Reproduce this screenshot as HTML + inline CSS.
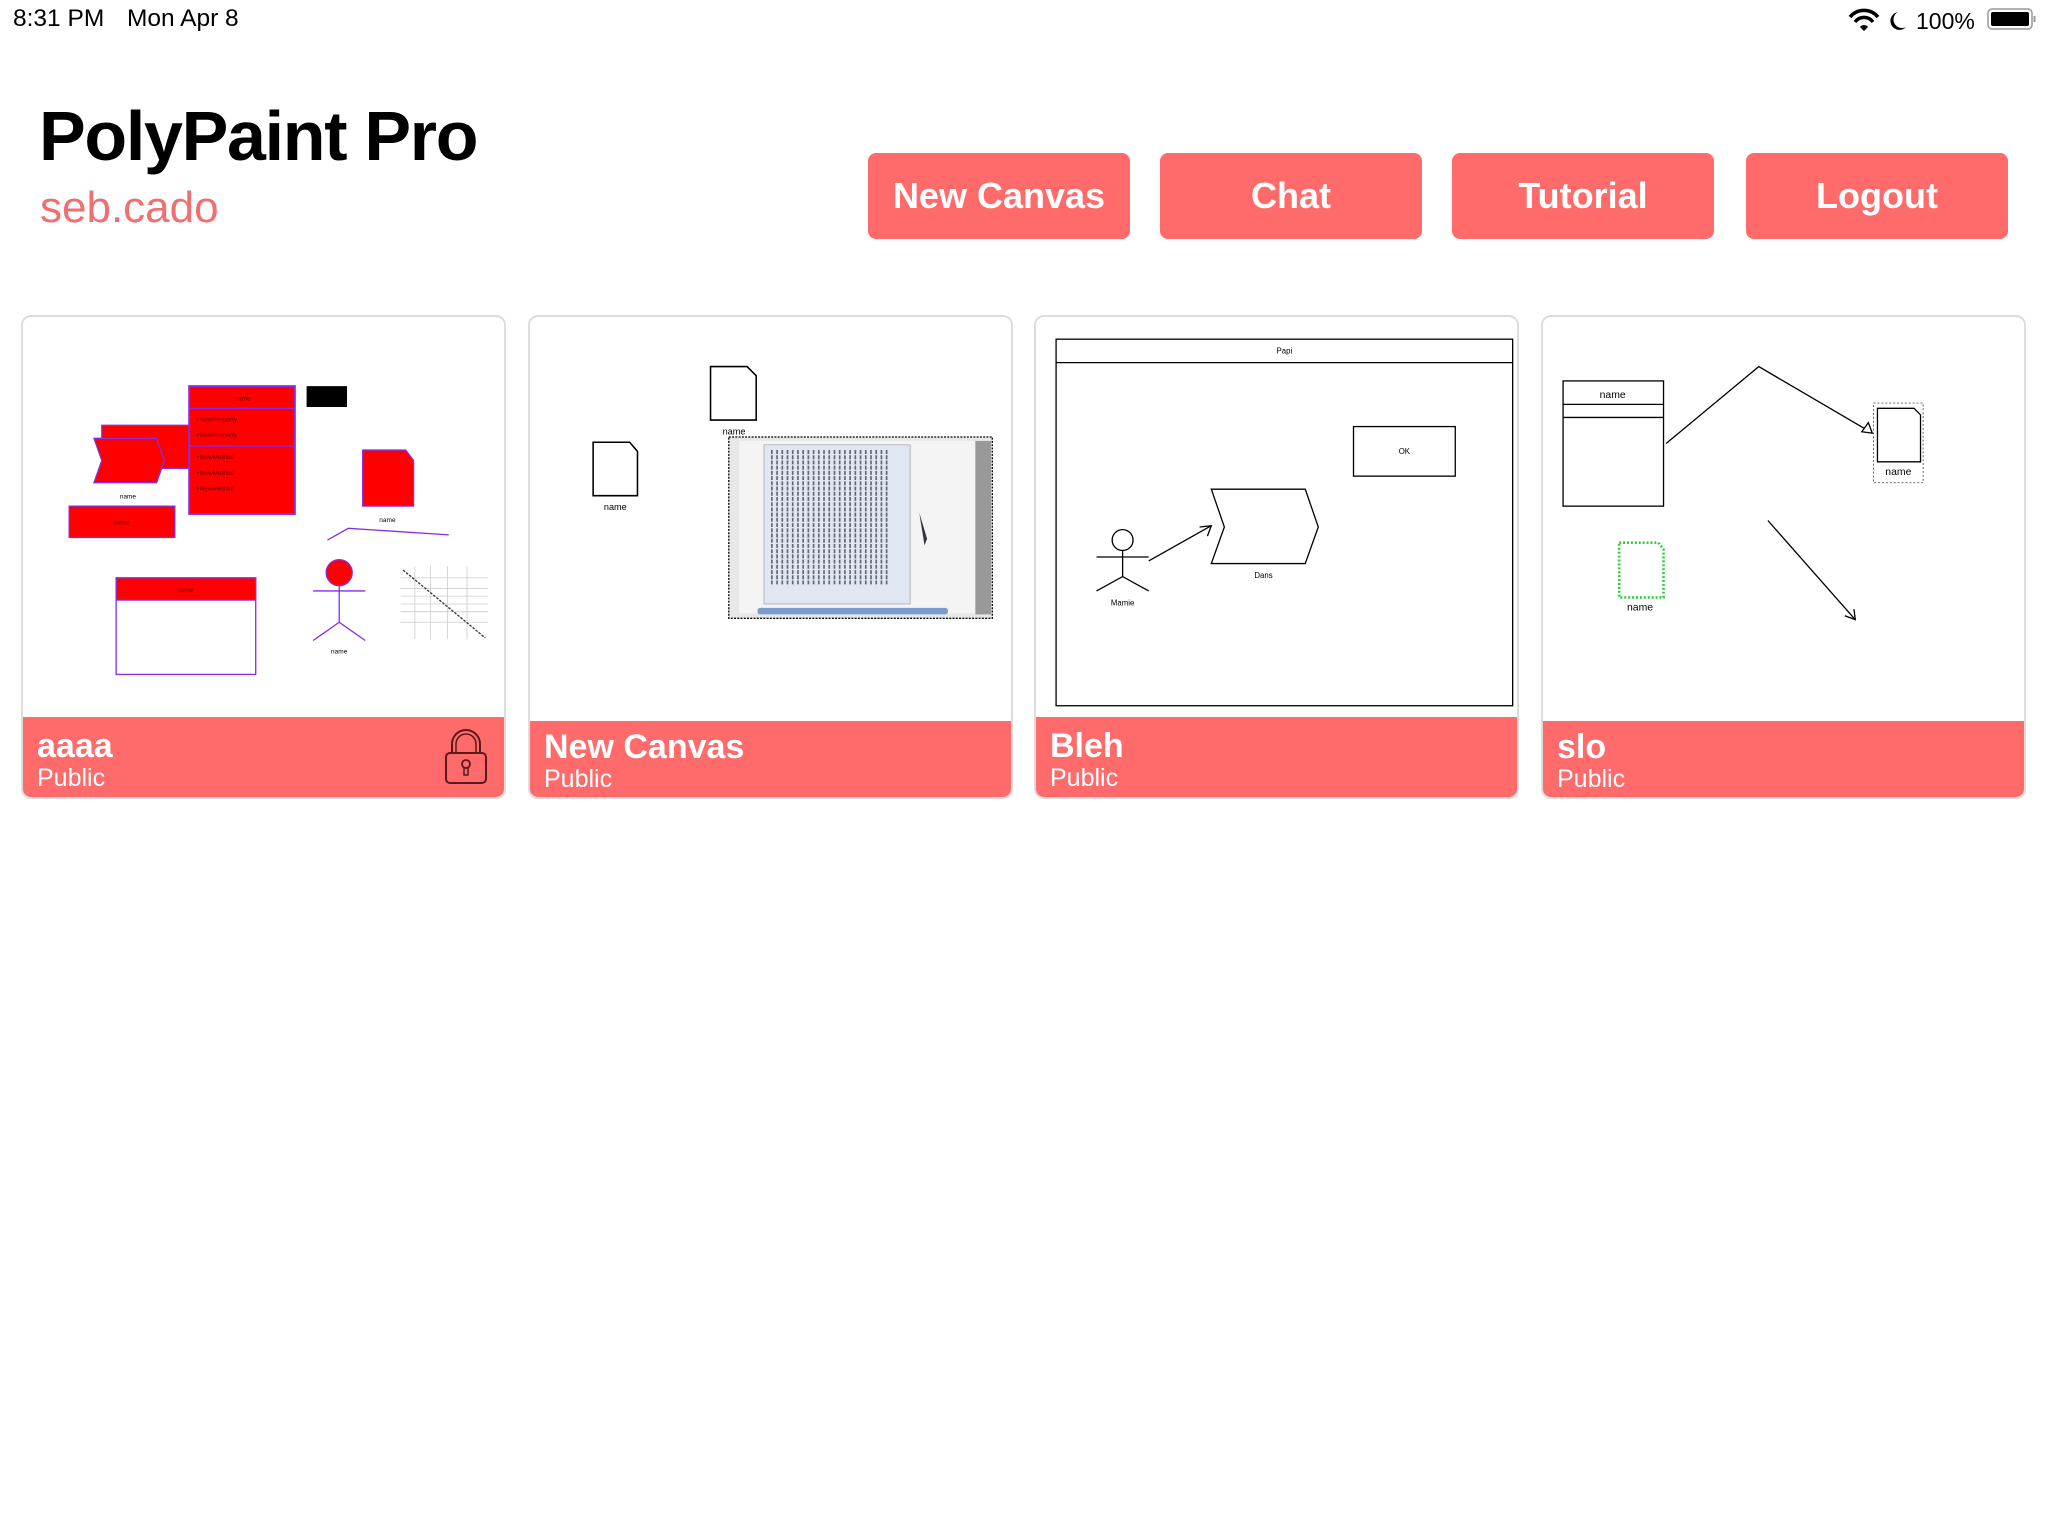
<!DOCTYPE html>
<html><head><meta charset="utf-8"><style>
*{margin:0;padding:0;box-sizing:border-box}
body{width:2048px;height:1536px;background:#fff;font-family:"Liberation Sans",sans-serif;position:relative;overflow:hidden}
.abs{position:absolute}
.btn{position:absolute;top:153px;width:262px;height:86px;background:#ff6b6b;border-radius:8px;color:#fff;font-size:36px;font-weight:bold;text-align:center;line-height:86px}
.card{position:absolute;top:315px;width:485px;height:484px;border:2px solid #ddd;border-radius:10px;overflow:hidden;background:#fff}
.card svg{position:absolute;left:0;top:0}
.foot{position:absolute;left:0;right:0;bottom:0;height:78px;background:#ff6b6b;color:#fff}
.foot .t{position:absolute;left:14px;top:10px;font-size:34px;font-weight:bold}
.foot .p{position:absolute;left:14px;top:47px;font-size:25px}
</style></head><body>
<div class="abs" style="left:13px;top:5px;font-size:24.5px;color:#000">8:31 PM</div>
<div class="abs" style="left:127px;top:5px;font-size:24.5px;color:#000">Mon Apr 8</div>
<svg class="abs" style="left:1848px;top:6px" width="190" height="30" viewBox="0 0 190 30">
<path d="M2 11 A18 18 0 0 1 30 11" stroke="#000" stroke-width="3.5" fill="none"/>
<path d="M7 16 A11 11 0 0 1 25 16" stroke="#000" stroke-width="3.5" fill="none"/>
<path d="M12 21 L16 25 L20 21 A5 5 0 0 0 12 21Z" fill="#000"/>
<path d="M50 6 A9 9 0 1 0 58 21 A8 8 0 0 1 50 6Z" fill="#000"/>
<text x="68" y="23" font-family="Liberation Sans" font-size="23">100%</text>
<rect x="140" y="3" width="44" height="20" rx="4" fill="none" stroke="#999" stroke-width="1.5"/>
<rect x="143" y="6" width="38" height="14" rx="2" fill="#000"/>
<rect x="185.5" y="10" width="2" height="6" fill="#999"/>
</svg>
<div class="abs" style="left:39px;top:96px;font-size:70px;font-weight:bold;color:#000;letter-spacing:-1.3px">PolyPaint Pro</div>
<div class="abs" style="left:40px;top:183px;font-size:44px;color:#f07070">seb.cado</div>
<div class="btn" style="left:868px">New Canvas</div>
<div class="btn" style="left:1160px">Chat</div>
<div class="btn" style="left:1452px">Tutorial</div>
<div class="btn" style="left:1746px">Logout</div>

<div class="card" style="left:21px">
<svg width="485" height="407" viewBox="0 0 371 312" font-family="Liberation Sans" text-anchor="middle">
<rect x="60" y="83" width="67" height="33" fill="red" stroke="#8a2be2"/>
<polygon points="54,93 102,93 108,110 102,127 54,127 60,110" fill="red" stroke="#8a2be2"/>
<text x="80" y="139" font-size="5">name</text>
<rect x="127" y="53" width="81" height="98" fill="red" stroke="#8a2be2" stroke-width="1.5"/>
<line x1="127" y1="70" x2="208" y2="70" stroke="#8a2be2"/><line x1="127" y1="99" x2="208" y2="99" stroke="#8a2be2"/>
<g font-size="5" text-anchor="start" fill="#600"><text x="132" y="80">+NewProperty</text><text x="132" y="92">+NewProperty</text><text x="132" y="109">+NewMethod</text><text x="132" y="121">+NewMethod</text><text x="132" y="133">+NewMethod</text></g>
<text x="168" y="64" font-size="5" fill="#600">name</text>
<rect x="217" y="53" width="31" height="16" fill="#000"/>
<rect x="35" y="145" width="81" height="24" fill="red" stroke="#8a2be2"/><text x="75" y="159" font-size="5" fill="#600">name</text>
<polygon points="260,102 293,102 299,110 299,145 260,145" fill="red" stroke="#8a2be2"/>
<text x="279" y="157" font-size="5">name</text>
<polyline points="233,171 249,162 326,167" fill="none" stroke="#8a2be2"/>
<rect x="71" y="200" width="107" height="74" fill="#fff" stroke="#8a2be2"/><rect x="71" y="200" width="107" height="17" fill="red" stroke="#8a2be2"/>
<text x="124" y="211" font-size="5" fill="#600">name</text>
<circle cx="242" cy="196" r="10" fill="red" stroke="#8a2be2"/>
<g stroke="#8a2be2" fill="none"><line x1="242" y1="206" x2="242" y2="234"/><line x1="222" y1="210" x2="262" y2="210"/><polyline points="222,248 242,234 262,248"/></g>
<text x="242" y="258" font-size="5">name</text>
<g stroke="#ccc" stroke-width="0.6"><line x1="289" y1="200" x2="356" y2="200"/><line x1="289" y1="208" x2="356" y2="208"/><line x1="289" y1="214" x2="356" y2="214"/><line x1="289" y1="220" x2="356" y2="220"/><line x1="289" y1="226" x2="356" y2="226"/><line x1="289" y1="234" x2="356" y2="234"/><line x1="300" y1="191" x2="300" y2="247"/><line x1="312" y1="191" x2="312" y2="247"/><line x1="325" y1="191" x2="325" y2="247"/><line x1="340" y1="191" x2="340" y2="247"/></g>
<line x1="291" y1="194" x2="354" y2="246" stroke="#333" stroke-dasharray="2,1"/>
</svg>
<div class="foot" style="height:80px"><div class="t">aaaa</div><div class="p">Public</div>
<svg class="abs" style="left:420px;top:12px" width="46" height="56" viewBox="0 0 46 56"><path d="M9 24 V15 A14 14 0 0 1 37 15 V24" fill="none" stroke="#5a1a1a" stroke-width="2"/><path d="M13 24 V15 A10 10 0 0 1 33 15 V24" fill="none" stroke="#5a1a1a" stroke-width="1.5"/><rect x="3" y="24" width="40" height="30" rx="4" fill="none" stroke="#5a1a1a" stroke-width="2"/><circle cx="23" cy="35" r="4" fill="none" stroke="#5a1a1a" stroke-width="1.8"/><path d="M21 39 h4 v7 h-4z" fill="none" stroke="#5a1a1a" stroke-width="1.5"/></svg>
</div></div>

<div class="card" style="left:528px">
<svg width="485" height="407" viewBox="0 0 371 312" font-family="Liberation Sans" text-anchor="middle">
<polygon points="138,38 166,38 173,45 173,79 138,79" fill="#fff" stroke="#000" stroke-width="1.2"/><text x="156" y="90" font-size="7">name</text>
<polygon points="48,96 76,96 82,103 82,137 48,137" fill="#fff" stroke="#000" stroke-width="1.2"/><text x="65" y="148" font-size="7">name</text>
<rect x="152" y="92" width="202" height="139" fill="#e8e8e8" stroke="#000" stroke-dasharray="1.5,1"/>
<rect x="160" y="95" width="190" height="132" fill="#f4f4f4"/>
<rect x="179" y="98" width="112" height="122" fill="#e0e6f2" stroke="#999" stroke-width="0.5"/>
<g stroke="#667" stroke-width="1.3" stroke-dasharray="3,1">
<line x1="185" y1="102" x2="185" y2="205"/><line x1="189" y1="102" x2="189" y2="205"/><line x1="193" y1="102" x2="193" y2="205"/><line x1="197" y1="102" x2="197" y2="205"/><line x1="201" y1="102" x2="201" y2="205"/><line x1="205" y1="102" x2="205" y2="205"/><line x1="209" y1="102" x2="209" y2="205"/><line x1="213" y1="102" x2="213" y2="205"/><line x1="217" y1="102" x2="217" y2="205"/><line x1="221" y1="102" x2="221" y2="205"/><line x1="225" y1="102" x2="225" y2="205"/><line x1="229" y1="102" x2="229" y2="205"/><line x1="233" y1="102" x2="233" y2="205"/><line x1="237" y1="102" x2="237" y2="205"/><line x1="241" y1="102" x2="241" y2="205"/><line x1="245" y1="102" x2="245" y2="205"/><line x1="249" y1="102" x2="249" y2="205"/><line x1="253" y1="102" x2="253" y2="205"/><line x1="257" y1="102" x2="257" y2="205"/><line x1="261" y1="102" x2="261" y2="205"/><line x1="265" y1="102" x2="265" y2="205"/><line x1="269" y1="102" x2="269" y2="205"/><line x1="273" y1="102" x2="273" y2="205"/></g>
<path d="M298 150 l6 20 l-2 5z" fill="#334"/>
<rect x="341" y="95" width="12" height="133" fill="#999"/>
<rect x="174" y="223" width="146" height="5" rx="2" fill="#7a9ad0"/>
</svg>
<div class="foot" style="height:76px"><div class="t" style="top:7px">New Canvas</div><div class="p" style="top:44px">Public</div></div></div>

<div class="card" style="left:1034px">
<svg width="485" height="407" viewBox="0 0 371 312" font-family="Liberation Sans" text-anchor="middle">
<rect x="15" y="17" width="350" height="281" fill="#fff" stroke="#000" stroke-width="1"/><line x1="15" y1="35" x2="365" y2="35" stroke="#000"/>
<text x="190" y="28" font-size="6">Papi</text>
<rect x="243" y="84" width="78" height="38" fill="none" stroke="#000"/><text x="282" y="105" font-size="6">OK</text>
<polygon points="134,132 206,132 216,161 206,189 134,189 144,161" fill="none" stroke="#000"/><text x="174" y="200" font-size="6">Dans</text>
<circle cx="66" cy="171" r="8" fill="none" stroke="#000"/>
<g stroke="#000" fill="none"><line x1="66" y1="179" x2="66" y2="199"/><line x1="46" y1="184" x2="86" y2="184"/><polyline points="46,210 66,199 86,210"/>
<line x1="86" y1="187" x2="134" y2="160"/><polyline points="125,161 134,160 131,168"/></g>
<text x="66" y="221" font-size="6">Mamie</text>
</svg>
<div class="foot" style="height:80px"><div class="t">Bleh</div><div class="p">Public</div></div></div>

<div class="card" style="left:1541px">
<svg width="485" height="407" viewBox="0 0 371 312" font-family="Liberation Sans" text-anchor="middle">
<rect x="15" y="49" width="77" height="96" fill="#fff" stroke="#000"/><line x1="15" y1="67" x2="92" y2="67" stroke="#000"/><line x1="15" y1="77" x2="92" y2="77" stroke="#000"/>
<text x="53" y="62" font-size="8">name</text>
<polyline points="94,97 165,38 252,89" fill="none" stroke="#000"/><polygon points="252,89 244,88 249,81" fill="#fff" stroke="#000"/>
<rect x="253" y="66" width="38" height="61" fill="none" stroke="#555" stroke-dasharray="1.5,1.5" stroke-width="0.7"/>
<polygon points="256,70 284,70 289,75 289,111 256,111" fill="#fff" stroke="#000"/><text x="272" y="121" font-size="8">name</text>
<polygon points="58,173 88,173 92,178 92,215 58,215" fill="none" stroke="#2ecc40" stroke-width="2" stroke-dasharray="1.5,1.5"/><text x="74" y="225" font-size="8">name</text>
<line x1="172" y1="156" x2="239" y2="232" stroke="#000"/><polyline points="231,229 239,232 238,224" fill="none" stroke="#000"/>
</svg>
<div class="foot" style="height:76px"><div class="t" style="top:7px">slo</div><div class="p" style="top:44px">Public</div></div></div>
</body></html>
